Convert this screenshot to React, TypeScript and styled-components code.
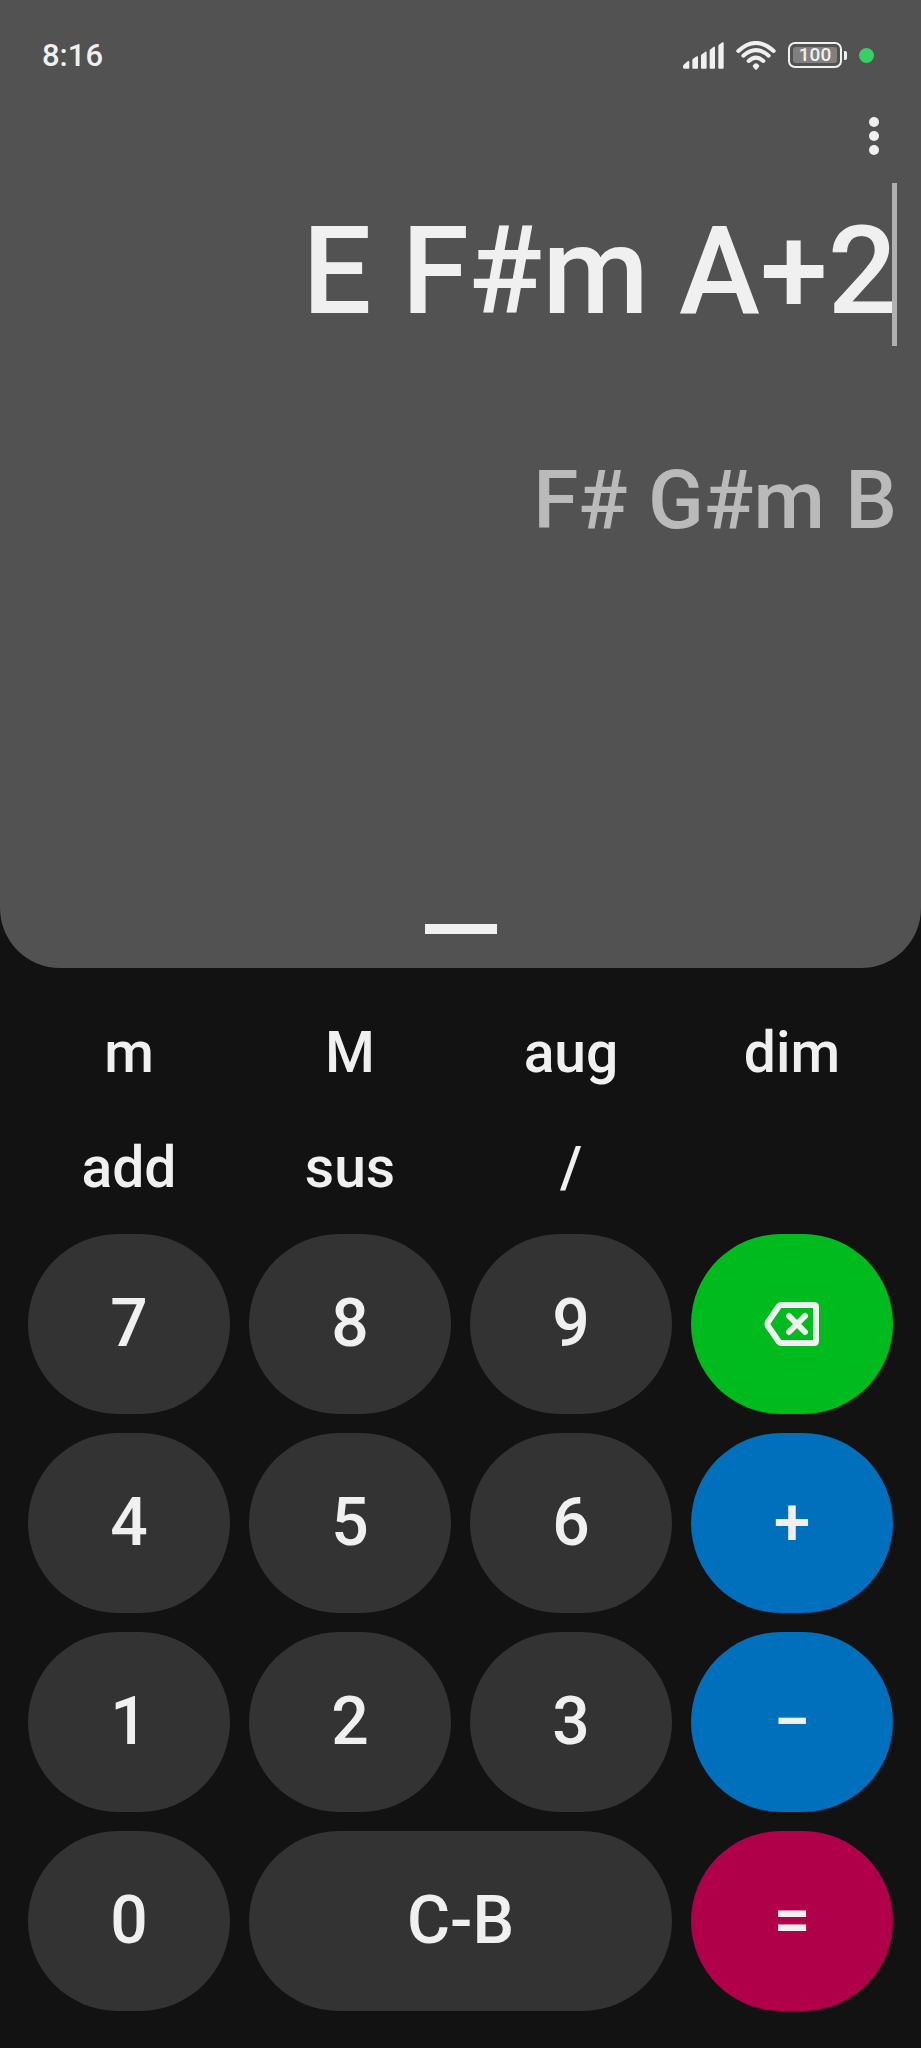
import React, { useState } from 'react';
import styled, { createGlobalStyle } from 'styled-components';

const colors = {
  panel: '#525252',
  page: '#121212',
  text: '#f0f0f0',
  faded: '#bababa',
  key: '#333333',
  erase: '#00bb1e',
  operator: '#0070bd',
  equals: '#b0004a',
};

const GlobalStyle = createGlobalStyle`
  *, *::before, *::after { box-sizing: border-box; }
  body {
    margin: 0;
    background: ${colors.page};
    color: ${colors.text};
    font-family: Roboto, 'Noto Sans', sans-serif;
    font-weight: 500;
  }
`;

const Screen = styled.main`
  display: flex;
  flex-direction: column;
  min-height: 100vh;
`;

const DisplayPanel = styled.section`
  display: flex;
  flex: 1;
  flex-direction: column;
  background: ${colors.panel};
  border-radius: 0 0 60px 60px;
`;

const StatusBar = styled.header`
  display: flex;
  align-items: center;
  justify-content: space-between;
  height: 110px;
  padding: 0 47px 0 42px;
`;

const Clock = styled.time`
  padding-top: 2px;
  font-size: 31px;
  line-height: 36px;
`;

const StatusIcons = styled.div`
  display: flex;
  align-items: center;
  gap: 12px;
`;

const Battery = styled.div`
  display: flex;
  align-items: center;
  gap: 2px;
`;

const BatteryCase = styled.div`
  width: 54px;
  height: 26px;
  padding: 3px;
  border: 2px solid ${colors.text};
  border-radius: 7px;
`;

const BatteryLevel = styled.div`
  height: 16px;
  border-radius: 3px;
  background: #808080;
  font-size: 19px;
  line-height: 16px;
  text-align: center;
`;

const BatteryNub = styled.div`
  width: 3px;
  height: 9px;
  border-radius: 0 2px 2px 0;
  background: ${colors.text};
`;

const PrivacyDot = styled.div`
  width: 15px;
  height: 15px;
  border-radius: 50%;
  background: #36d164;
`;

const Toolbar = styled.div`
  display: flex;
  justify-content: flex-end;
  padding: 0 32px;
`;

const MenuButton = styled.button`
  display: flex;
  flex-direction: column;
  align-items: center;
  justify-content: center;
  gap: 4px;
  width: 30px;
  height: 52px;
  padding: 0;
  border: 0;
  background: none;
`;

const MenuDot = styled.span`
  width: 10px;
  height: 10px;
  border-radius: 50%;
  background: ${colors.text};
`;

const ExpressionRow = styled.div`
  display: flex;
  margin-top: 21px;
  padding: 0 24px;
`;

const ExpressionInput = styled.input`
  flex: 1;
  min-width: 0;
  height: 163px;
  padding: 13px 0 0;
  border: 0;
  outline: 0;
  background: none;
  color: inherit;
  font: inherit;
  font-size: 122px;
  line-height: 150px;
  text-align: right;
  caret-color: transparent;
`;

/* The caret covers the right edge of the last character. */
const Caret = styled.span`
  z-index: 1;
  width: 5px;
  margin-left: -5px;
  background: #b0b0b0;
`;

const Result = styled.output`
  display: block;
  margin-top: 106px;
  padding: 0 24px;
  color: ${colors.faded};
  font-size: 82px;
  line-height: 96px;
  text-align: right;
`;

const DragHandle = styled.button`
  width: 72px;
  height: 10px;
  margin: auto auto 34px;
  padding: 0;
  border: 0;
  background: ${colors.text};
`;

const Pad = styled.section`
  display: flex;
  flex-direction: column;
  gap: 9px;
  padding: 27px 28px 37px;
`;

const ChordGrid = styled.div`
  display: grid;
  grid-template-columns: repeat(4, 1fr);
  grid-auto-rows: 115px;
  column-gap: 19px;
`;

const KeyGrid = styled.div`
  display: grid;
  grid-template-columns: repeat(4, 1fr);
  grid-auto-rows: 180px;
  gap: 19px;
`;

const ChordButton = styled.button`
  padding: 0;
  border: 0;
  background: none;
  color: inherit;
  font: inherit;
  font-size: 57px;
`;

type Tone = 'key' | 'erase' | 'operator' | 'equals';

const Key = styled.button<{ $tone: Tone; $span: number }>`
  display: flex;
  align-items: center;
  justify-content: center;
  grid-column: span ${(p) => p.$span};
  padding: ${(p) => (p.$tone === 'erase' ? '0' : '0 0 2px')};
  border: 0;
  border-radius: 90px;
  background: ${(p) => colors[p.$tone]};
  color: inherit;
  font: inherit;
  font-size: 66px;
`;

const SignalIcon = () => (
  <svg width="41" height="27" viewBox="75 66 123 81" fill={colors.text} aria-hidden="true">
    <path d="M77 134 L90 123 Q94 122 94 126 V143 Q94 146 91 146 H79 Q75 146 75 142 V138 Q75 136 77 134Z" />
    <path d="M104 117 L116 109 Q120 108 120 112 V143 Q120 146 117 146 H106 Q103 146 103 143 V120 Q103 118 104 117Z" />
    <path d="M130 104 L142 95 Q146 94 146 98 V143 Q146 146 143 146 H132 Q129 146 129 143 V107 Q129 105 130 104Z" />
    <path d="M156 89 L167 80 Q171 79 171 83 V143 Q171 146 168 146 H158 Q155 146 155 143 V92 Q155 90 156 89Z" />
    <path d="M182 75 L193 67 Q197 66 197 70 V143 Q197 146 194 146 H184 Q181 146 181 143 V78 Q181 76 182 75Z" />
  </svg>
);

const WifiIcon = () => (
  <svg width="40" height="29" viewBox="229 61 120 87" fill="none" stroke={colors.text} aria-hidden="true">
    <path d="M236 91 Q289 43 342 91" strokeWidth="12" strokeLinecap="round" />
    <path d="M251 105 Q289 72 327 105" strokeWidth="12" strokeLinecap="round" />
    <path d="M267 121 Q289 101 311 121" strokeWidth="12" strokeLinecap="round" />
    <path d="M279 135 Q289 121 299 135 Q299 138 292 146 Q289 149 286 146 Q279 138 279 135Z" fill={colors.text} stroke="none" />
  </svg>
);

const BackspaceIcon = () => (
  <svg
    width="56"
    height="44"
    viewBox="0 0 56 44"
    fill="none"
    stroke={colors.text}
    strokeWidth="6"
    strokeLinecap="round"
    strokeLinejoin="round"
    aria-hidden="true"
  >
    <path d="M17 3 H50 Q52 3 52 5 V39 Q52 41 50 41 H17 Q16 41 15 40 L4 24 Q3 22 4 20 L15 4 Q16 3 17 3Z" />
    <path d="M25 14 L41 30 M41 14 L25 30" />
  </svg>
);

const chords = ['m', 'M', 'aug', 'dim', 'add', 'sus', '/'];

const keys: { label: string; tone?: Tone; span?: number }[] = [
  { label: '7' },
  { label: '8' },
  { label: '9' },
  { label: 'Backspace', tone: 'erase' },
  { label: '4' },
  { label: '5' },
  { label: '6' },
  { label: '+', tone: 'operator' },
  { label: '1' },
  { label: '2' },
  { label: '3' },
  { label: '−', tone: 'operator' },
  { label: '0' },
  { label: 'C-B', span: 2 },
  { label: '=', tone: 'equals' },
];

export default function App() {
  const [expression, setExpression] = useState('E F#m A+2');

  return (
    <Screen>
      <GlobalStyle />
      <DisplayPanel>
        <StatusBar>
          <Clock>8:16</Clock>
          <StatusIcons>
            <SignalIcon />
            <WifiIcon />
            <Battery>
              <BatteryCase>
                <BatteryLevel>100</BatteryLevel>
              </BatteryCase>
              <BatteryNub />
            </Battery>
            <PrivacyDot />
          </StatusIcons>
        </StatusBar>
        <Toolbar>
          <MenuButton aria-label="More options">
            <MenuDot />
            <MenuDot />
            <MenuDot />
          </MenuButton>
        </Toolbar>
        <ExpressionRow>
          <ExpressionInput
            aria-label="Expression"
            value={expression}
            onChange={(e) => setExpression(e.target.value)}
          />
          <Caret />
        </ExpressionRow>
        <Result>F# G#m B</Result>
        <DragHandle aria-label="Expand history" />
      </DisplayPanel>
      <Pad>
        <ChordGrid>
          {chords.map((chord) => (
            <ChordButton key={chord}>{chord}</ChordButton>
          ))}
        </ChordGrid>
        <KeyGrid>
          {keys.map(({ label, tone = 'key', span = 1 }) => (
            <Key key={label} $tone={tone} $span={span} aria-label={label}>
              {tone === 'erase' ? <BackspaceIcon /> : label}
            </Key>
          ))}
        </KeyGrid>
      </Pad>
    </Screen>
  );
}
